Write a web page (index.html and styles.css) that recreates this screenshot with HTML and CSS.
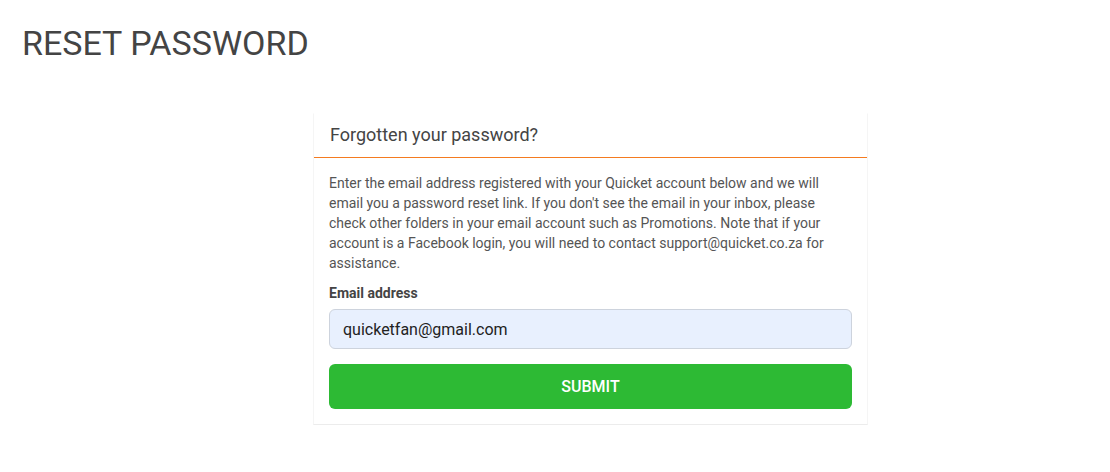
FILE: index.html
```html
<!DOCTYPE html>
<html>
<head>
<meta charset="utf-8">
<link rel="stylesheet" href="styles.css">
</head>
<body>
<div class="page">
  <h1 class="title">RESET PASSWORD</h1>
  <div class="card">
    <div class="card-header">Forgotten your password?</div>
    <div class="card-body">
      <p class="intro">Enter the email address registered with your Quicket account below and we will email you a password reset link. If you don't see the email in your inbox, please check other folders in your email account such as Promotions. Note that if your account is a Facebook login, you will need to contact support@quicket.co.za for assistance.</p>
      <label class="label">Email address</label>
      <div class="input">quicketfan@gmail.com</div>
      <button class="submit">SUBMIT</button>
    </div>
  </div>
</div>
</body>
</html>
```

FILE: styles.css
```css
* { box-sizing: border-box; }
html, body { margin: 0; padding: 0; background: #fff; }
body { font-family: Roboto, "Liberation Sans", sans-serif; color: #555; }
.page { padding: 23px 0 0 22px; }
.title {
  margin: 0;
  font-size: 34px;
  line-height: 41px;
  font-weight: 400;
  color: #444;
}
.card {
  margin: 49px 0 0 291px;
  width: 555px;
  border: 1px solid #f5f5f5;
  border-bottom-color: #ececec;
  border-top-color: #fff;
}
.card-header {
  padding: 9px 16px 10px;
  font-size: 18px;
  line-height: 24px;
  color: #444;
  border-bottom: 1px solid #f47b20;
}
.card-body { padding: 15px 15px 15px; }
.intro {
  margin: 0;
  font-size: 14px;
  line-height: 20px;
  color: #555;
}
.label {
  display: block;
  margin-top: 10px;
  font-size: 14px;
  line-height: 20px;
  font-weight: 700;
  color: #444;
}
.input {
  margin-top: 6px;
  height: 40px;
  padding: 0 13px;
  display: flex;
  align-items: center;
  background: #e8f0fe;
  border: 1px solid #cdd3dd;
  border-radius: 6px;
  font-size: 16px;
  color: #222;
}
.submit {
  display: block;
  width: 100%;
  margin-top: 15px;
  height: 45px;
  border: 0;
  border-radius: 6px;
  background: #2dba34;
  color: #fff;
  font-family: Roboto, "Liberation Sans", sans-serif;
  font-size: 16px;
  font-weight: 500;
}
```
